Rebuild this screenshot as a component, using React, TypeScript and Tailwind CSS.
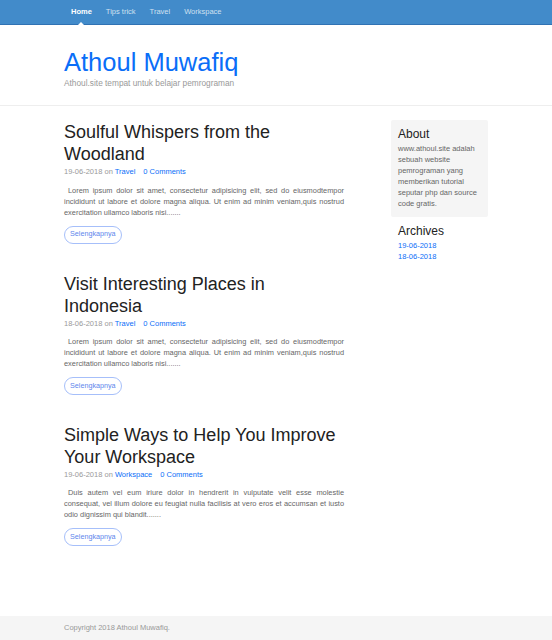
const navItems = ['Home', 'Tips trick', 'Travel', 'Workspace']

const posts = [
  {
    title: 'Soulful Whispers from the Woodland',
    date: '19-06-2018',
    category: 'Travel',
    body: 'Lorem ipsum dolor sit amet, consectetur adipisicing elit, sed do eiusmodtempor incididunt ut labore et dolore magna aliqua. Ut enim ad minim veniam,quis nostrud exercitation ullamco laboris nisi.......',
  },
  {
    title: 'Visit Interesting Places in Indonesia',
    date: '18-06-2018',
    category: 'Travel',
    body: 'Lorem ipsum dolor sit amet, consectetur adipisicing elit, sed do eiusmodtempor incididunt ut labore et dolore magna aliqua. Ut enim ad minim veniam,quis nostrud exercitation ullamco laboris nisi.......',
  },
  {
    title: 'Simple Ways to Help You Improve Your Workspace',
    date: '19-06-2018',
    category: 'Workspace',
    body: 'Duis autem vel eum iriure dolor in hendrerit in vulputate velit esse molestie consequat, vel illum dolore eu feugiat nulla facilisis at vero eros et accumsan et iusto odio dignissim qui blandit.......',
  },
]

export default function App() {
  return (
    <div className="min-h-screen flex flex-col bg-white font-['Liberation_Sans',Arial,sans-serif]">
      {/* Navbar */}
      <div className="h-[25px] bg-[#428bca] border-b border-[#3072b3]">
        <nav className="flex h-full pl-[71px] gap-[14px]">
          {navItems.map((item, i) => (
            <a
              key={item}
              className={`relative flex items-center text-[7.5px] ${i === 0 ? 'text-white font-bold' : 'text-[#cfe0f0]'}`}
            >
              {item}
              {i === 0 && (
                <span className="absolute left-1/2 -translate-x-1/2 bottom-[-1px] w-0 h-0 border-x-[3px] border-x-transparent border-b-[3px] border-b-white" />
              )}
            </a>
          ))}
        </nav>
      </div>

      {/* Header */}
      <div className="border-b border-[#eeeeee] pl-[64px] pt-[22px] pb-[16px]">
        <h1 className="text-[25.5px] leading-[30px] text-[#0a6ef8]">Athoul Muwafiq</h1>
        <p className="text-[8.3px] text-[#999999]">Athoul.site tempat untuk belajar pemrograman</p>
      </div>

      {/* Content */}
      <div className="flex flex-1 pl-[64px] pt-[15px]">
        <main className="w-[280px]">
          {posts.map((p) => (
            <div key={p.title} className="mb-[29px]">
              <h2 className="text-[18px] leading-[22px] text-[#222222]">{p.title}</h2>
              <p className="text-[7.5px] text-[#999999] mt-[1px]">
                {p.date} on <a className="text-[#0a6ef8]">{p.category}</a>
                <a className="text-[#0a6ef8] ml-[8px]">0 Comments</a>
              </p>
              <p className="text-[7.4px] leading-[11px] text-[#666666] text-justify mt-[7px] indent-[4px]">
                {p.body}
              </p>
              <button className="mt-[8px] h-[18px] px-[5px] rounded-full border border-[#a6bffa] text-[7.2px] text-[#5e86ec]">
                Selengkapnya
              </button>
            </div>
          ))}
        </main>

        <aside className="w-[97px] ml-[47px] mt-[-1px]">
          <div className="bg-[#f5f5f5] rounded-[2px] px-[7px] pt-[7px] pb-[8px]">
            <h4 className="text-[12px] leading-[14px] text-[#222222]">About</h4>
            <p className="text-[7.5px] leading-[11px] text-[#666666] mt-[2px]">
              www.athoul.site adalah sebuah website pemrograman yang memberikan tutorial seputar php dan source code gratis.
            </p>
          </div>
          <div className="px-[7px] mt-[7px]">
            <h4 className="text-[12px] leading-[14px] text-[#222222]">Archives</h4>
            <ol className="mt-[2px] text-[7.5px] leading-[11px] text-[#0a6ef8]">
              <li>19-06-2018</li>
              <li>18-06-2018</li>
            </ol>
          </div>
        </aside>
      </div>

      {/* Footer */}
      <footer className="h-[24px] bg-[#f5f5f5] pl-[64px] flex items-center">
        <p className="text-[7.5px] text-[#999999]">Copyright 2018 Athoul Muwafiq.</p>
      </footer>
    </div>
  )
}
